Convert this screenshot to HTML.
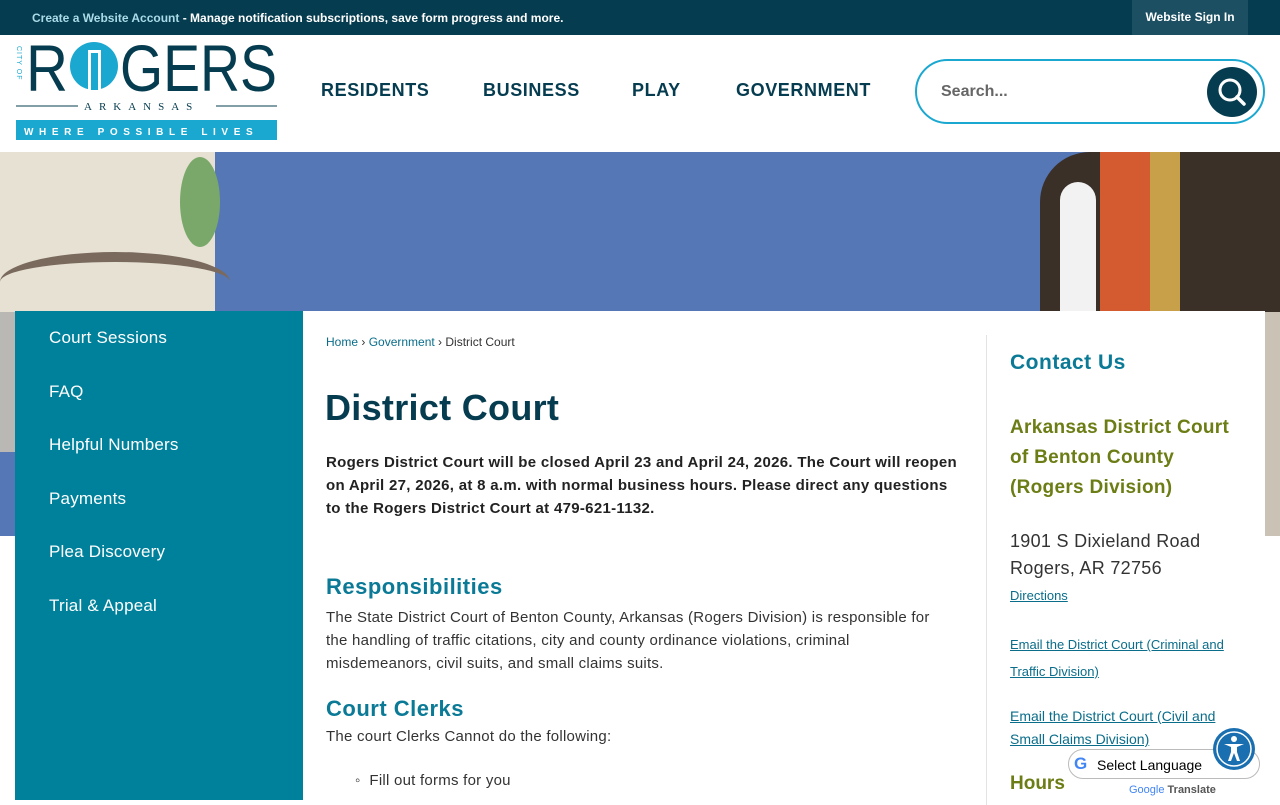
<!DOCTYPE html>
<html><head><meta charset="utf-8"><style>
*{margin:0;padding:0;box-sizing:border-box}
body{width:1280px;height:800px;overflow:hidden;font-family:"Liberation Sans",sans-serif;background:#fff;position:relative}
.top{height:35px;background:#063c4f;color:#fff;font-size:12px;font-weight:bold;}
.top .l{position:absolute;left:32px;top:11px}
.top .l b{color:#a9dbe8}
.top .r{position:absolute;left:1132px;top:0;width:116px;height:35px;background:#1c4f61;text-align:center;line-height:35px;font-size:12px}
.hdr{position:absolute;top:35px;left:0;width:1280px;height:117px;background:#fff}
.nav{position:absolute;top:45px;font-size:18px;font-weight:bold;color:#063c4f;letter-spacing:.6px}
.search{position:absolute;left:915px;top:59px;width:350px;height:65px;border:2px solid #1ba8d0;border-radius:33px}
.search span{position:absolute;left:24px;top:22px;color:#666;font-size:16px;font-weight:bold}
.search .b{position:absolute;right:6px;top:6px;width:50px;height:50px;border-radius:50%;background:#063c4f}
.hero{position:absolute;top:152px;left:0;width:1280px;height:384px;background:#5677b5;overflow:hidden}
.side{position:absolute;left:15px;top:311px;width:288px;height:489px;background:#00819b}
.side div{position:absolute;left:34px;color:#fff;font-size:17px;letter-spacing:.2px}
.main{position:absolute;left:303px;top:311px;width:962px;height:489px;background:#fff}
.a{color:#0a6d8a}
.p{letter-spacing:.25px}
</style></head><body>
<div class="top"><div class="l"><b>Create a Website Account</b> - Manage notification subscriptions, save form progress and more.</div><div class="r">Website Sign In</div></div>
<div class="hdr">
<svg style="position:absolute;left:12px;top:5px" width="270" height="108">
<text x="5" y="6" font-size="7" fill="#1ba8d0" transform="rotate(90 5 6)" letter-spacing="1">CITY OF</text>
<text x="14" y="51" font-size="66" fill="#063c4f" font-family="Liberation Sans" textLength="42" lengthAdjust="spacingAndGlyphs">R</text>
<circle cx="82" cy="26" r="24" fill="#1ba8d0"/><rect x="76" y="10" width="13" height="40" fill="#fff"/><rect x="79" y="13" width="7" height="37" fill="#1ba8d0"/>
<text x="108" y="51" font-size="66" fill="#063c4f" font-family="Liberation Sans" textLength="157" lengthAdjust="spacingAndGlyphs">GERS</text>
<line x1="4" y1="66" x2="66" y2="66" stroke="#063c4f"/><line x1="204" y1="66" x2="265" y2="66" stroke="#063c4f"/>
<text x="72" y="70" font-size="11" fill="#063c4f" font-family="Liberation Serif" letter-spacing="7">ARKANSAS</text>
<rect x="4" y="80" width="261" height="20" fill="#1ba8d0"/>
<text x="12" y="95" font-size="10" fill="#fff" font-weight="bold" letter-spacing="5.6">WHERE POSSIBLE LIVES</text>
</svg>
<div class="nav" style="left:321px">RESIDENTS</div>
<div class="nav" style="left:483px">BUSINESS</div>
<div class="nav" style="left:632px">PLAY</div>
<div class="nav" style="left:736px">GOVERNMENT</div>
</div>
<div class="search"><span>Search...</span><div class="b"><svg width="50" height="50"><circle cx="23" cy="23" r="10" stroke="#fff" stroke-width="3" fill="none"/><line x1="30" y1="30" x2="37" y2="37" stroke="#fff" stroke-width="3.5" stroke-linecap="round"/></svg></div></div>
<div class="hero">
<div style="position:absolute;left:0;top:0;width:215px;height:160px;background:#e6e1d2"></div>
<div style="position:absolute;left:0;top:160px;width:15px;height:140px;background:#b9b8b5"></div>
<div style="position:absolute;left:0;top:100px;width:230px;height:60px;border-top:10px solid #7a6a5e;border-radius:50% 50% 0 0"></div>
<div style="position:absolute;left:180px;top:5px;width:40px;height:90px;background:#7aa86a;border-radius:50%"></div>
<div style="position:absolute;left:1040px;top:0;width:240px;height:160px;background:#3a3028;border-radius:50px 0 0 0"></div>
<div style="position:absolute;left:1060px;top:30px;width:36px;height:130px;background:#f2f2f2;border-radius:18px 18px 0 0"></div>
<div style="position:absolute;left:1100px;top:0;width:50px;height:160px;background:#d45a30"></div>
<div style="position:absolute;left:1150px;top:0;width:30px;height:160px;background:#c8a04a"></div>
<div style="position:absolute;left:1265px;top:160px;width:15px;height:224px;background:#c9c2b5"></div>
</div>
<div class="side">
<div style="top:17px">Court Sessions</div><div style="top:71px">FAQ</div><div style="top:124px">Helpful Numbers</div><div style="top:178px">Payments</div><div style="top:231px">Plea Discovery</div><div style="top:285px">Trial &amp; Appeal</div>
</div>
<div class="main">
<div style="position:absolute;left:23px;top:24px;font-size:12px;color:#333"><span class="a">Home</span> › <span class="a">Government</span> › District Court</div>
<div style="position:absolute;left:22px;top:76px;font-size:36px;font-weight:bold;color:#063c4f;letter-spacing:.3px">District Court</div>
<div class="p" style="position:absolute;left:23px;top:140px;width:640px;font-size:15px;font-weight:bold;color:#222;line-height:23px;letter-spacing:.3px">Rogers District Court will be closed April 23 and April 24, 2026. The Court will reopen on April 27, 2026, at 8 a.m. with normal business hours. Please direct any questions to the Rogers District Court at 479-621-1132.</div>
<div style="position:absolute;left:23px;top:263px;font-size:22px;font-weight:bold;color:#0a7a96;letter-spacing:.5px">Responsibilities</div>
<div class="p" style="position:absolute;left:23px;top:295px;width:620px;font-size:15px;color:#333;line-height:23px">The State District Court of Benton County, Arkansas (Rogers Division) is responsible for the handling of traffic citations, city and county ordinance violations, criminal misdemeanors, civil suits, and small claims suits.</div>
<div style="position:absolute;left:23px;top:385px;font-size:22px;font-weight:bold;color:#0a7a96;letter-spacing:.5px">Court Clerks</div>
<div class="p" style="position:absolute;left:23px;top:417px;font-size:15px;color:#333">The court Clerks Cannot do the following:</div>
<div class="p" style="position:absolute;left:52px;top:461px;font-size:15px;color:#333">◦&nbsp;&nbsp;Fill out forms for you</div>
<div style="position:absolute;left:683px;top:24px;width:1px;height:470px;background:#e3e3e3"></div>
<div style="position:absolute;left:707px;top:40px;font-size:21px;font-weight:bold;color:#0a7a96;letter-spacing:.5px">Contact Us</div>
<div style="position:absolute;left:707px;top:102px;width:236px;font-size:19px;font-weight:bold;color:#6b7d14;line-height:30px;letter-spacing:.3px">Arkansas District Court of Benton County (Rogers Division)</div>
<div style="position:absolute;left:707px;top:217px;font-size:18px;color:#333;line-height:27px;letter-spacing:.3px">1901 S Dixieland Road<br>Rogers, AR 72756</div>
<div style="position:absolute;left:707px;top:277px;font-size:13px;text-decoration:underline" class="a">Directions</div>
<div style="position:absolute;left:707px;top:320px;width:240px;font-size:13px;text-decoration:underline;line-height:27px" class="a">Email the District Court (Criminal and Traffic Division)</div>
<div style="position:absolute;left:707px;top:394px;width:240px;font-size:14px;text-decoration:underline;line-height:23px" class="a">Email the District Court (Civil and Small Claims Division)</div>
<div style="position:absolute;left:707px;top:462px;font-size:19px;font-weight:bold;color:#6b7d14">Hours</div>
</div>
<div style="position:absolute;left:1068px;top:749px;width:192px;height:30px;border:1px solid #bbb;border-radius:15px;background:#fff;font-size:14px;color:#000"><span style="position:absolute;left:5px;top:4px;font-weight:bold;color:#4285f4;font-size:17px">G</span><span style="position:absolute;left:28px;top:7px">Select Language</span></div>
<div style="position:absolute;left:1129px;top:784px;font-size:11px;color:#555"><span style="color:#4285f4">Google</span> <b>Translate</b></div>
<div style="position:absolute;left:1213px;top:728px;width:42px;height:42px;border-radius:50%;background:#1a6fb0"><svg width="42" height="42"><circle cx="21" cy="21" r="17" fill="none" stroke="#fff" stroke-width="1.5"/><circle cx="21" cy="11" r="3" fill="#fff"/><path d="M11 16 L31 16 L24 19 L24 24 L27 33 L24 33 L21 25 L18 33 L15 33 L18 24 L18 19 Z" fill="#fff"/></svg></div>
</body></html>
